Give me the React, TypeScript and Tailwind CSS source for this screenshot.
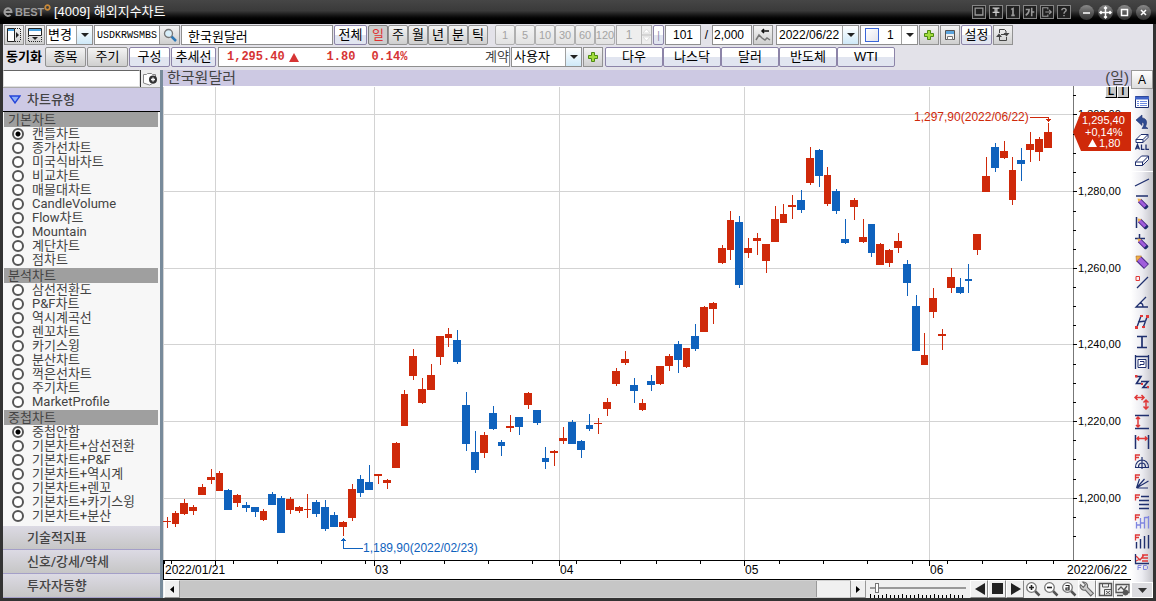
import type { ButtonHTMLAttributes, ReactNode } from "react";
import clsx from "clsx";

type Candle = ["r" | "b", number, number, number, number];

// direction, high, body top, body bottom, low (plot units)
const candles: Candle[] = [
  ["r", 517, 521, 522, 528], ["r", 511, 513, 524, 527], ["r", 499, 503, 514, 515], ["r", 505, 507, 511, 515],
  ["r", 484, 487, 495, 495], ["r", 469, 477, 480, 484], ["r", 471, 473, 491, 491], ["b", 489, 490, 510, 510],
  ["r", 494, 495, 503, 507], ["b", 502, 505, 508, 512], ["b", 507, 507, 512, 517], ["r", 509, 511, 520, 521],
  ["b", 492, 494, 505, 505], ["b", 496, 498, 533, 533], ["r", 497, 499, 510, 514], ["r", 506, 507, 511, 513],
  ["r", 494, 509, 510, 518], ["b", 500, 502, 514, 517], ["b", 500, 507, 529, 531], ["b", 512, 515, 527, 527],
  ["r", 521, 522, 527, 536], ["r", 484, 489, 518, 521], ["b", 475, 479, 493, 497], ["b", 465, 482, 490, 490],
  ["r", 474, 474, 476, 484], ["r", 479, 480, 483, 489], ["r", 442, 443, 468, 468], ["r", 390, 394, 426, 426],
  ["r", 349, 356, 376, 380], ["r", 378, 389, 403, 404], ["r", 364, 375, 390, 390], ["r", 336, 336, 357, 365],
  ["r", 328, 334, 338, 347], ["b", 330, 340, 362, 364], ["b", 392, 405, 444, 451], ["b", 431, 452, 470, 473],
  ["r", 432, 435, 453, 458], ["b", 406, 413, 429, 430], ["b", 440, 442, 446, 456], ["r", 415, 426, 428, 432],
  ["b", 417, 417, 427, 435], ["r", 392, 393, 405, 409], ["b", 410, 410, 423, 425], ["b", 447, 458, 462, 469],
  ["r", 450, 451, 453, 466], ["r", 427, 438, 441, 444], ["b", 420, 422, 444, 444], ["b", 440, 441, 450, 458],
  ["b", 414, 425, 429, 431], ["r", 418, 423, 424, 434], ["r", 398, 402, 409, 416], ["r", 368, 371, 384, 386],
  ["r", 351, 359, 363, 365], ["b", 378, 385, 391, 403], ["r", 399, 403, 410, 411], ["b", 375, 381, 385, 391],
  ["r", 366, 366, 384, 385], ["r", 354, 356, 366, 371], ["b", 341, 344, 360, 373], ["r", 348, 348, 367, 368],
  ["b", 324, 336, 349, 351], ["r", 306, 307, 332, 332], ["r", 302, 303, 309, 324], ["r", 245, 248, 263, 264],
  ["r", 211, 220, 250, 260], ["b", 216, 222, 285, 288], ["r", 238, 248, 253, 258], ["r", 233, 238, 241, 255],
  ["r", 244, 244, 261, 273], ["r", 206, 219, 242, 242], ["r", 204, 214, 223, 223], ["r", 195, 205, 207, 219],
  ["b", 190, 200, 210, 213], ["r", 147, 158, 183, 185], ["b", 149, 150, 176, 187], ["r", 167, 175, 204, 206],
  ["b", 189, 191, 211, 214], ["b", 219, 239, 243, 244], ["r", 198, 200, 207, 220], ["r", 219, 237, 242, 243],
  ["b", 224, 224, 253, 257], ["r", 243, 244, 265, 265], ["r", 249, 250, 263, 267], ["r", 233, 241, 248, 253],
  ["b", 260, 264, 283, 296], ["b", 295, 306, 351, 351], ["r", 333, 355, 365, 365], ["r", 288, 298, 312, 318],
  ["r", 329, 334, 336, 350], ["r", 268, 277, 288, 293], ["b", 278, 287, 293, 294], ["b", 264, 279, 281, 293],
  ["r", 234, 234, 250, 255], ["r", 157, 176, 192, 192], ["b", 143, 147, 168, 172], ["r", 141, 151, 158, 159],
  ["r", 157, 170, 200, 205], ["b", 148, 160, 164, 181], ["r", 132, 144, 150, 162], ["r", 137, 139, 152, 161],
  ["r", 123, 132, 148, 148],
];

const RED = "#cf290a";
const BLUE = "#0f62bd";
const NAVY = "#1f2f6e";
const HOT = "#e03838";

const candleX = (i: number) => Math.floor(167 + i * 8.812);

const priceLines = [
  { y: 114, label: "1,300,00" },
  { y: 191, label: "1,280,00" },
  { y: 268, label: "1,260,00" },
  { y: 344, label: "1,240,00" },
  { y: 421, label: "1,220,00" },
  { y: 498, label: "1,200,00" },
];
const minorTicks = [95, 134, 153, 172, 211, 230, 249, 287, 306, 325, 364, 383, 402, 440, 459, 479, 517, 536];
const months = [
  { x: 215, label: "" },
  { x: 374, label: "03" },
  { x: 559, label: "04" },
  { x: 744, label: "05" },
  { x: 929, label: "06" },
];
const weekTicks = [164, 171, 233, 277, 321, 365, 400, 444, 488, 532, 576, 620, 656, 700, 779, 823, 867, 912, 947, 982, 1026, 1053];

const groups = [
  {
    title: "기본차트",
    name: "basic",
    selected: "캔들차트",
    items: ["캔들차트", "종가선차트", "미국식바차트", "비교차트", "매물대차트", "CandleVolume", "Flow차트", "Mountain", "계단차트", "점차트"],
  },
  {
    title: "분석차트",
    name: "basic",
    selected: "",
    items: ["삼선전환도", "P&F차트", "역시계곡선", "렌꼬차트", "카기스윙", "분산차트", "꺽은선차트", "주기차트", "MarketProfile"],
  },
  {
    title: "중첩차트",
    name: "overlay",
    selected: "중첩안함",
    items: ["중첩안함", "기본차트+삼선전환", "기본차트+P&F", "기본차트+역시계", "기본차트+렌꼬", "기본차트+카기스윙", "기본차트+분산"],
  },
];

interface ToolButtonProps extends ButtonHTMLAttributes<HTMLButtonElement> {
  tone?: "gray" | "glass" | "pressed";
}

function ToolButton({ tone = "gray", className, ...props }: ToolButtonProps) {
  return (
    <button
      type="button"
      className={clsx(
        "flex h-5 flex-none items-center justify-center whitespace-nowrap border",
        tone === "gray" && "border-[#929292] bg-linear-to-b from-[#f4f4f4] to-[#cfcfcf]",
        tone === "glass" && "rounded-xs border-[#8c84a8] bg-linear-to-b from-white from-50% to-[#e1e5f0] to-50%",
        tone === "pressed" && "border-[#808080] bg-[#cccccc] text-[#e03030]",
        className
      )}
      {...props}
    />
  );
}

function DropArrow({ light = false }: { light?: boolean }) {
  return (
    <span
      className={clsx(
        "pointer-events-none flex w-4 flex-none items-center justify-center border-l border-[#a0a0a0]",
        light ? "bg-white" : "bg-linear-to-b from-white to-[#cfe9f8]"
      )}
    >
      <svg width="8" height="4" viewBox="0 0 8 4"><path d="M0 0h8L4 4z" fill="#222" /></svg>
    </span>
  );
}

function PlusIcon() {
  return (
    <svg width="12" height="12" viewBox="0 0 12 12">
      <path d="M4.500 1.500h3v3h3v3h-3v3h-3v-3h-3v-3h3z" fill="#a2dc3c" stroke="#4d8a12" />
    </svg>
  );
}

function TitleBar() {
  const small: { label: string; icon: ReactNode }[] = [
    { label: "창", icon: <path d="M2.500 2.500h9v8h-9z" strokeWidth="1.500" /> },
    { label: "고정", icon: <path d="M3 2.500h8M3 7.500h8M7 8v4M6 3v4M8 3v4" stroke="#ccc" strokeWidth="1.500" /> },
    { label: "1", icon: <path d="M5 4l2-1v8M5 11h4" strokeWidth="2" /> },
    { label: "글꼴", icon: <path d="M2 4h4c0 3-1 5-4 7M9 2v10M9 7h3" strokeWidth="1.800" /> },
    { label: "내보내기", icon: <path d="M8 4V2H2v10h6v-2M5 7h7M9.500 4.500L12 7 9.500 9.500" strokeWidth="1.300" /> },
    { label: "도움말", icon: <path d="M4.500 5c0-3 5-3 5 0 0 1.500-2.500 1.500-2.500 4M7 10.500v1.500" strokeWidth="1.700" /> },
  ];
  const round = [
    { label: "최소화", d: "M4 8h7" },
    { label: "이동", d: "M7.500 2v11M2 7.500h11M6 3.500l1.500-1.500L9 3.500M6 11.500L7.500 13 9 11.500M3.500 6L2 7.500 3.500 9M11.500 6L13 7.500 11.500 9" },
    { label: "최대화", d: "M4.500 4.500h6v6h-6z" },
    { label: "닫기", d: "M5 5l5 5M10 5l-5 5" },
  ];
  return (
    <header className="flex h-6 flex-none items-center bg-linear-to-b from-[#464646] via-[#3a3a3a] via-45% to-black to-90% pr-[5px] pl-[3px]">
      <div className="flex w-[51px] flex-none items-center font-bold text-[#9d9d9d]">
        <svg className="mr-0.5" width="10" height="10" viewBox="0 0 10 10" fill="none" stroke="#9d9d9d" strokeWidth="2"><path d="M1.500 5H8.500A3.500 3.800 0 1 0 7.500 7.800" /></svg>
        <span className="text-[11px] leading-4">BEST</span>
        <svg className="-mt-2.5" width="7" height="7" viewBox="0 0 7 7"><circle cx="3.500" cy="3.500" r="2.300" fill="none" stroke="#c98a3a" strokeWidth="1.700" /></svg>
      </div>
      <h1 className="text-[13px] whitespace-nowrap text-white">[4009] 해외지수차트</h1>
      <div className="ml-auto flex gap-[3px]">
        {small.map((s) => (
          <button key={s.label} type="button" aria-label={s.label} className="size-3.5 border border-[#858585] bg-[#202020]">
            <svg width="12" height="12" viewBox="0 0 14 14" fill="none" stroke="#999">{s.icon}</svg>
          </button>
        ))}
      </div>
      <div className="ml-2 flex gap-1">
        {round.map((r) => (
          <button key={r.label} type="button" aria-label={r.label} className="size-[15px] rounded-full bg-linear-to-b from-[#8a8a8a] to-[#303030]">
            <svg width="15" height="15" viewBox="0 0 15 15" fill="none" stroke="#fff" strokeWidth="1.500"><path d={r.d} /></svg>
          </button>
        ))}
      </div>
    </header>
  );
}

const field = "h-5 flex-none border border-[#8f8f8f] bg-white";

function MainToolbar() {
  return (
    <div className="flex h-5 items-center gap-px">
      <ToolButton aria-label="왼쪽 패널" className="w-5">
        <svg width="16" height="16" viewBox="0 0 16 16" fill="none" stroke="#222">
          <path d="M1.500 1.500h7v13h-7z" fill="#fff" /><path d="M2 3h6" stroke="#4aa3e0" strokeWidth="2" /><path d="M9 1.500h6M9 14.500h6M14.500 2v12" strokeDasharray="1 1" /><path d="M10 5l3 3-3 3z" fill="#222" stroke="none" />
        </svg>
      </ToolButton>
      <ToolButton aria-label="위쪽 패널" className="w-5">
        <svg width="16" height="16" viewBox="0 0 16 16" fill="none" stroke="#222">
          <path d="M1.500 1.500h13v7h-13z" fill="#fff" /><path d="M2 3h12" stroke="#4aa3e0" strokeWidth="2" /><path d="M1.500 9v5.500h13V9" strokeDasharray="1 1" /><path d="M5 10h6l-3 3z" fill="#222" stroke="none" />
        </svg>
      </ToolButton>
      <div className={clsx(field, "flex w-[47px]")}>
        <select aria-label="변경" className="w-0 flex-1 appearance-none pl-px text-[13px] leading-4 outline-none"><option>변경</option></select>
        <DropArrow />
      </div>
      <div className="flex flex-none">
        <input aria-label="종목코드" defaultValue="USDKRWSMBS" className={clsx(field, "w-[66px] pl-0.5 font-['Liberation_Mono'] text-[10px]")} />
        <ToolButton aria-label="종목 검색" className="w-5 border-l-0">
          <svg width="14" height="14" viewBox="0 0 14 14"><path d="M8 8l5 5" stroke="#2f78b5" strokeWidth="2.500" /><circle cx="5.500" cy="5.500" r="4" fill="#d8effa" stroke="#777" strokeWidth="1.300" /></svg>
        </ToolButton>
      </div>
      <input aria-label="종목명" defaultValue="한국원달러" className={clsx(field, "w-[152px] pl-1.5 text-[13px]")} />
      <ToolButton tone="glass" className="w-[33px] text-[13px]">전체</ToolButton>
      <div className="flex flex-none">
        {["일", "주", "월", "년", "분", "틱"].map((t) => (
          <ToolButton key={t} tone={t === "일" ? "pressed" : "gray"} className="w-5 rounded-xs text-[13px]">{t}</ToolButton>
        ))}
      </div>
      <div className="ml-1.5 flex flex-none">
        {["1", "5", "10", "30", "60", "120"].map((t) => (
          <ToolButton key={t} disabled className="w-5 rounded-xs border-[#b0b0b0]! to-[#e2e2e2]! text-[11px] text-[#a4a4a4]">{t}</ToolButton>
        ))}
      </div>
      <div className={clsx(field, "flex w-9 border-[#a8a8a8] bg-[#eeeeee]!")}>
        <input aria-label="분 단위" defaultValue="1" disabled className="w-0 flex-1 text-center text-xs text-[#a4a4a4]" />
        <span className="flex w-2.5 flex-none items-center border-l border-[#b8b8b8]">
          <svg width="9" height="14" viewBox="0 0 9 14"><path d="M1 5l3.500-4L8 5zM1 9l3.500 4L8 9z" fill="#fff" stroke="#ddd" /><path d="M0 7h9" stroke="#bbb" /></svg>
        </span>
      </div>
      <ToolButton tone="glass" className="w-[11px] text-[10px] text-[#8c84a8]">|</ToolButton>
      <input aria-label="조회 개수" defaultValue="101" className={clsx(field, "w-9 text-center text-xs")} />
      <span className="w-[9px] flex-none text-center text-xs">/</span>
      <input aria-label="전체 개수" defaultValue="2,000" className={clsx(field, "w-10 pl-px text-xs")} />
      <ToolButton aria-label="구간 이동" className="w-5">
        <svg width="16" height="14" viewBox="0 0 16 14" fill="none"><path d="M1 12l3-5 3 3 3 2 2-2 3 2" stroke="#777" strokeWidth="1.500" /><path d="M7 3h7M9 1L7 3l2 2" stroke="#111" strokeWidth="1.500" /></svg>
      </ToolButton>
      <div className={clsx(field, "ml-0.5 flex w-[83px]")}>
        <input aria-label="조회 일자" defaultValue="2022/06/22" className="w-0 flex-1 pl-0.5 text-xs" />
        <DropArrow />
      </div>
      <div className={clsx(field, "flex w-[58px] items-center")}>
        <span className="ml-1 size-3.5 flex-none border border-[#3a66d8] bg-linear-to-br from-white to-[#e4e4ec]" />
        <select aria-label="선 굵기" className="w-0 flex-1 appearance-none pl-2 text-xs outline-none"><option>1</option></select>
        <span className="flex h-full"><DropArrow light /></span>
      </div>
      <ToolButton aria-label="추가" className="w-5"><PlusIcon /></ToolButton>
      <ToolButton aria-label="저장" className="w-5">
        <svg width="12" height="12" viewBox="0 0 12 12"><path d="M1.500 1.500h9v9h-9z" fill="#eee" stroke="#555" /><path d="M2 2h8v3H2z" fill="#5ba4dc" /><path d="M3.500 7.500h5v3h-5z" fill="#fff" stroke="#777" /></svg>
      </ToolButton>
      <ToolButton tone="glass" className="w-[31px] text-[13px]">설정</ToolButton>
      <ToolButton aria-label="새로고침" className="w-5">
        <svg width="14" height="14" viewBox="0 0 14 14" fill="none" stroke="#444"><path d="M3.500 5V1.500h5L10 3v2M10.500 9v3.500h-7V9M5 6.500h4" /><path d="M7.500 5h6l-3 3.500zM0 9h6L3 5.500z" fill="#444" stroke="none" /></svg>
      </ToolButton>
    </div>
  );
}

function QuoteToolbar() {
  return (
    <div className="mt-0.5 flex h-5 items-center gap-px text-[13px]">
      <span className="w-10 flex-none text-center leading-5 font-bold whitespace-nowrap">동기화</span>
      <ToolButton className="w-[41px] rounded-xs">종목</ToolButton>
      <ToolButton className="w-[41px] rounded-xs">주기</ToolButton>
      <ToolButton tone="glass" className="w-[41px]">구성</ToolButton>
      <ToolButton tone="glass" className="w-[45px]">추세선</ToolButton>
      <div className={clsx(field, "ml-px flex w-[292px] items-center pl-2 font-['Liberation_Mono'] text-xs font-bold text-[#d63434]")}>
        <span>1,295.40</span>
        <svg className="ml-1" width="10" height="9" viewBox="0 0 10 9"><path d="M5 0l5 9H0z" fill="#d63434" /></svg>
        <span className="ml-7">1.80</span>
        <span className="ml-4">0.14%</span>
        <span className="ml-auto font-['Liberation_Sans','Noto_Sans_CJK_KR'] text-[13px] font-normal text-[#444]">계약</span>
      </div>
      <div className={clsx(field, "flex w-[71px]")}>
        <select aria-label="사용자" className="w-0 flex-1 appearance-none pl-0.5 leading-4 outline-none"><option>사용자</option></select>
        <DropArrow />
      </div>
      <ToolButton aria-label="사용자 추가" className="w-5"><PlusIcon /></ToolButton>
      <div className="ml-px flex flex-none">
        {["다우", "나스닥", "달러", "반도체", "WTI"].map((t) => (
          <ToolButton key={t} tone="glass" className="w-[58px]">{t}</ToolButton>
        ))}
      </div>
    </div>
  );
}

function Sidebar() {
  return (
    <aside className="flex w-[157px] flex-none flex-col bg-[#f7f7f7] font-['Roboto','Noto_Sans_CJK_KR',sans-serif] text-[13px] text-[#444]">
      <div className="flex h-[17px] flex-none">
        <input aria-label="차트 검색" className="w-0 flex-1 border border-t-[#666] border-[#e0e0e0] bg-white" />
        <button type="button" aria-label="검색 추가" className="flex w-5 items-center justify-center border-l border-[#333] bg-[#eee]">
          <svg className="flex-none" width="17" height="14" viewBox="0 0 17 14" fill="none"><path d="M1.500 2.500h3l1-1h4l1 1h3v8l-3 1-3 1.500-6-2z" fill="#fff" stroke="#888" /><circle cx="11" cy="7.500" r="4" fill="#333" /><path d="M11 5.500v4M9 7.500h4" stroke="#fff" strokeWidth="1.300" /></svg>
        </button>
      </div>
      <button type="button" className="flex h-[25px] flex-none items-center gap-1.5 border-t border-b border-t-[#aaa] border-b-black bg-[#cdc9e4] pl-1.5 font-medium">
        <svg width="12" height="9" viewBox="0 0 12 9"><path d="M1 1h10L6 8z" fill="#8fb0f8" stroke="#2444d8" strokeWidth="1.300" /></svg>
        차트유형
      </button>
      {groups.map((g) => (
        <fieldset key={g.title} className="flex flex-none flex-col pb-px">
          <legend className="float-left mr-0.5 ml-px h-[15px] w-[154px] bg-[#9f9f9f] pl-1 leading-[15px]">{g.title}</legend>
          {g.items.map((item) => (
            <label key={item} className="flex h-3.5 items-center gap-2 pl-[9px] leading-3.5 whitespace-nowrap">
              <input
                type="radio"
                name={g.name}
                defaultChecked={item === g.selected}
                className="size-3 flex-none appearance-none rounded-full border-2 border-[#555] bg-white checked:bg-[radial-gradient(circle,#000_2px,#fff_3px)]"
              />
              {item}
            </label>
          ))}
        </fieldset>
      ))}
      <div className="mt-auto flex flex-col">
        {["기술적지표", "신호/강세/약세", "투자자동향"].map((t) => (
          <button key={t} type="button" className="h-6 border-b border-[#a49fc8] bg-linear-to-b from-[#dcdae4] to-[#c6c6c6] pl-6 text-left font-medium">
            {t}
          </button>
        ))}
      </div>
    </aside>
  );
}

function PriceChart() {
  return (
    <svg className="block h-full w-full bg-white" viewBox="163 86 968 494" preserveAspectRatio="xMinYMin meet" fontSize="12" role="img" aria-label="한국원달러 일봉 차트">
      <g shapeRendering="crispEdges">
        {priceLines.map((p) => (
          <rect key={p.y} x="163" y={p.y} width="910" height="1" fill="#d3d3d3" />
        ))}
        {months.map((m) => (
          <rect key={m.x} x={m.x} y="87" width="1" height="473" fill="#d3d3d3" />
        ))}
        <rect x="163" y="87" width="1" height="473" fill="#d3d3d3" />
        <rect x="1073" y="86" width="1" height="474" fill="#777" />
        {priceLines.map((p) => (
          <rect key={p.y} x="1073" y={p.y} width="4" height="1" />
        ))}
        {minorTicks.map((y) => (
          <rect key={y} x="1073" y={y} width="3" height="1" />
        ))}
        <rect x="163" y="560" width="968" height="1" />
        <rect x="163" y="579" width="968" height="1" />
        <rect x="163" y="560" width="1" height="20" />
        {weekTicks.map((x) => (
          <rect key={x} x={x} y="561" width="1" height="3" />
        ))}
        {months.map((m) => (
          <rect key={m.x} x={m.x} y="561" width="1" height="5" />
        ))}
        {candles.map(([dir, high, top, bottom, low], i) => {
          const x = candleX(i);
          const left = i === 0 ? 163 : candleX(i - 1) + 5;
          return (
            <g key={i} fill={dir === "r" ? RED : BLUE}>
              <rect x={x} y={high} width="1" height={low - high} />
              <rect x={left} y={top} width={x + 4 - left} height={bottom - top} />
            </g>
          );
        })}
        <path d="M1030 117.500h18.500v4" fill="none" stroke={RED} />
        <path d="M1046 119h5l-2.500 3z" fill={RED} />
        <path d="M343.500 540v8.500H363" fill="none" stroke={BLUE} />
        <path d="M341 541h5l-2.500-3z" fill={BLUE} />
      </g>
      <g fontSize="11">
        {priceLines.map((p) => (
          <text key={p.y} x="1078" y={p.y + 4}>{p.label}</text>
        ))}
      </g>
      <text x="914" y="121" fill={RED}>1,297,90(2022/06/22)</text>
      <text x="363" y="552" fill={BLUE}>1,189,90(2022/02/23)</text>
      <text x="165" y="574">2022/01/21</text>
      {months.map((m) => (
        <text key={m.x} x={m.x + 1} y="574">{m.label}</text>
      ))}
      <text x="1067" y="574">2022/06/22</text>
      <path d="M1073 132l8-20h50v39h-50z" fill={RED} />
      <g fill="#fff" fontSize="11">
        <text x="1082" y="124">1,295,40</text>
        <text x="1085" y="136">+0,14%</text>
        <path d="M1088 147l4.500-8 4.500 8z" />
        <text x="1099" y="147">1,80</text>
      </g>
    </svg>
  );
}

function MagnifierIcon({ mark }: { mark: ReactNode }) {
  return (
    <svg width="16" height="16" viewBox="0 0 16 16" fill="none">
      <path d="M10 10l4.500 4.500" stroke="#555" strokeWidth="2.500" />
      <circle cx="6.500" cy="6.500" r="4.800" fill="#fff" stroke="#777" strokeWidth="1.300" />
      <g stroke="#222" strokeWidth="1.600">{mark}</g>
    </svg>
  );
}

function ChartFooter() {
  return (
    <div className="flex h-[18px] flex-none items-stretch bg-[#f0f0f0] pl-px">
      <button type="button" aria-label="이전 구간" className="flex w-4 flex-none items-center justify-center border border-white border-r-[#999] border-b-[#999]">
        <svg width="4" height="7" viewBox="0 0 4 7"><path d="M4 0v7L0 3.500z" /></svg>
      </button>
      <div className="flex flex-1 border-y border-[#d0d0d0]">
        <div className="w-[95%] border-r border-[#999] bg-[#c6c6c6]" />
      </div>
      <button type="button" aria-label="다음 구간" className="flex w-4 flex-none items-center justify-center border border-[#999] border-t-white">
        <svg width="4" height="7" viewBox="0 0 4 7"><path d="M0 0v7l4-3.500z" /></svg>
      </button>
      <div className="mx-1 flex w-[96px] flex-none flex-col justify-between">
        <input
          type="range"
          aria-label="확대 비율"
          defaultValue={5}
          className="mt-1 h-2 w-full appearance-none bg-[linear-gradient(#999,#999)] bg-[length:100%_2px] bg-center bg-no-repeat [&::-webkit-slider-thumb]:h-2.5 [&::-webkit-slider-thumb]:w-1 [&::-webkit-slider-thumb]:appearance-none [&::-webkit-slider-thumb]:border [&::-webkit-slider-thumb]:border-[#777] [&::-webkit-slider-thumb]:bg-white"
        />
        <svg width="96" height="4" viewBox="0 0 96 4" shapeRendering="crispEdges">
          {Array.from({ length: 24 }, (_, i) => (
            <rect key={i} x={i * 4} y={i % 4 === 0 ? 0 : 1} width="1" height="4" />
          ))}
        </svg>
      </div>
      {["M12 1v12L2 7z", "M1 1h11v11H1z", "M2 1v12l10-6z"].map((d, i) => (
        <button key={d} type="button" aria-label={["뒤로", "정지", "앞으로"][i]} className="flex w-[18px] flex-none items-center justify-center border border-white border-r-[#888] border-b-[#888]">
          <svg width="13" height="14" viewBox="0 0 13 14"><path d={d} fill="#222" /></svg>
        </button>
      ))}
      <button type="button" aria-label="확대" className="flex w-[18px] flex-none items-center justify-center"><MagnifierIcon mark={<path d="M6.500 4v5M4 6.500h5" />} /></button>
      <button type="button" aria-label="축소" className="flex w-[18px] flex-none items-center justify-center"><MagnifierIcon mark={<path d="M4 6.500h5" />} /></button>
      <button type="button" aria-label="자동 배율" className="flex w-[18px] flex-none items-center justify-center"><MagnifierIcon mark={<path d="M4.500 4.500H8V9H5V7h3" strokeWidth="1.200" />} /></button>
      <button type="button" aria-label="도구" className="flex w-[18px] flex-none items-center justify-center border border-white border-r-[#888]">
        <svg className="flex-none" width="16" height="16" viewBox="0 0 15 15"><path d="M1 4.500a4 4 0 0 0 5 4l5 5.500 2.500-2.500L8 6a4 4 0 0 0-4.500-5L6 3.500 4 6 1.500 3.500z" fill="#ccc" stroke="#666" /></svg>
      </button>
      <button type="button" aria-label="차트 저장" className="flex w-[18px] flex-none items-center justify-center border border-white border-r-[#888]">
        <svg width="15" height="15" viewBox="0 0 15 15" fill="none" stroke="#555"><path d="M1.500 1.500h12v12h-12z" strokeWidth="1.500" /><path d="M4.500 2v3h6V2M6.500 7.500h7v6h-7zM8 9l4 3M12 9l-4 3" /></svg>
      </button>
      <button type="button" aria-label="이미지 저장" className="flex w-[17px] flex-none items-center justify-center border border-white">
        <svg width="15" height="15" viewBox="0 0 15 15" fill="none" stroke="#555"><path d="M1 2.500h13v8H1zM3 8l3-3 3 3 3-4M2 13.500h6" strokeWidth="1.300" /><circle cx="10.500" cy="10.500" r="2.500" fill="#555" /></svg>
      </button>
    </div>
  );
}

function PencilIcon() {
  return (
    <g strokeLinecap="butt">
      <path d="M5.500 6.500l7 7" stroke="#4a2a86" strokeWidth="4.600" />
      <path d="M5.500 6.500l6 6" stroke="#a05ddb" strokeWidth="3" />
      <path d="M3.500 4.500l4 .5L4.500 8z" fill="#f2b04a" stroke="none" />
      <path d="M11.500 12.500l1.700 1.700" stroke={NAVY} strokeWidth="4" />
    </g>
  );
}

const fibMark = <path d="M1.500 6.500v-6M1 1h5M1 3.500h4" stroke={HOT} strokeWidth="1.300" />;

const drawTools: { label: string; icon: ReactNode }[] = [
  { label: "목록", icon: <><path d="M1.500 2.500h13v11h-13z" fill="#fff" /><path d="M1 4h14" stroke="#3f63c8" strokeWidth="3" /><path d="M3 7.500h2M3 9.500h2M3 11.500h2M6 7.500h7M6 9.500h7M6 11.500h7" stroke="#6e8ae0" /></> },
  { label: "되돌리기", icon: <path d="M2 6l6-5v3c4 0 6 4 3.500 8.500l2.500 2H8c3-4 2-6 0-6v3z" fill="#2f4a90" stroke={NAVY} strokeWidth=".6" /> },
  { label: "전체 지우기", icon: <><path d="M2 5.500L7 .500h7l-5 5zM2 5.500v3h7v-3M9 8.500l5-5v-3" fill="#fff" /><path d="M1.500 15.500L3.500 10.500l2 5M2.500 14h2M7.500 10.500v5h3M12 10.500v5h3" strokeWidth="1.300" /></> },
  { label: "지우기", icon: <path d="M1.500 8l6-6h7l-6 6zM1.500 8v3.500h7V8M8.500 11.500l6-6V2" fill="#fff" /> },
  { label: "추세선", icon: <path d="M1 12L15 5" strokeWidth="1.300" /> },
  { label: "수평선", icon: <><path d="M2 2h12" strokeWidth="1.500" /><PencilIcon /></> },
  { label: "수직선", icon: <><path d="M2.500 3v11" strokeWidth="1.500" /><PencilIcon /></> },
  { label: "십자선", icon: <><path d="M5.500 0v9M1 4.500h10" strokeWidth="1.500" /><PencilIcon /></> },
  { label: "형광펜", icon: <><path d="M5 5l7.500 7.500" stroke="#4a2a86" strokeWidth="7" /><path d="M5 5l7 7" stroke="#a05ddb" strokeWidth="5" /><path d="M2 2h5.500L2.500 7.500z" fill="#f2b04a" stroke="#a86a20" strokeWidth=".6" /></> },
  { label: "각도 추세선", icon: <><path d="M2 2.500h3.500v4H2z" stroke={HOT} /><path d="M3 14L14 3" strokeWidth="1.300" /></> },
  { label: "각도", icon: <path d="M14 13H2L12 3M6 9c2 0 3 2 3 4" strokeWidth="1.300" /> },
  { label: "평행선", icon: <><path d="M3 13L7 2M9 14l4-11M4 8l8-1" strokeWidth="1.400" /><path d="M1 12h3v3H1zM6 1h3v2H6zM8 12h3v2H8zM12 1h3v3h-3z" fill={HOT} stroke="none" /></> },
  { label: "구간", icon: <path d="M3 2.500h10M3 13.500h10M8 2.500v11" strokeWidth="1.700" /> },
  { label: "사각형", icon: <><path d="M1.500 1v14M14.500 1v14M1 2.500h14" strokeWidth="1.300" /><path d="M4 5.500h8v8H4zM6 7.500h4v3H6v1.500" fill="#fff" /></> },
  { label: "파동", icon: <><path d="M2 2.500h5L2.500 9.500H8M7 7.500h7l-5 6h6" strokeWidth="1.600" /><path d="M1 1h2.500v2.500H1zM7 9h2v2H7zM13 12h2v2h-2z" fill={HOT} stroke="none" /></> },
  { label: "이동 거리", icon: <path d="M1 3.500h9M3.500 1L1 3.500 3.500 6M7.500 1L10 3.500 7.500 6M12 6v9M9.500 8.500L12 6l2.500 2.500M9.500 12.500L12 15l2.500-2.500" stroke={HOT} strokeWidth="1.500" /> },
  { label: "가격 범위", icon: <><path d="M1 1.500h14M1 14.500h14" strokeWidth="1.300" /><path d="M4 3v10M2 5l2-2 2 2M2 11l2 2 2-2" stroke={HOT} strokeWidth="1.500" /></> },
  { label: "기간 범위", icon: <><path d="M1.500 1v14M14.500 1v14" strokeWidth="1.500" /><path d="M3 4.500h10M5 2.500l-2 2 2 2M11 2.500l2 2-2 2" stroke={HOT} strokeWidth="1.500" /></> },
  { label: "피보나치 원호", icon: <>{fibMark}<path d="M1.500 13.500c0-10 13-10 13 0M4.500 13.500c0-6 7-6 7 0M8 3v12M1 13.500h14" strokeWidth="1.200" /></> },
  { label: "피보나치 팬", icon: <>{fibMark}<path d="M2.500 14l3-9M2.500 14l8-9M2.500 14l12-7M2.500 14H14" strokeWidth="1.200" /></> },
  { label: "피보나치 되돌림", icon: <>{fibMark}<path d="M7 2.500h8M5 6.500h10M5 10.500h10M5 14.500h10" strokeWidth="1.500" /></> },
  { label: "피보나치 목표", icon: <>{fibMark}<path d="M2.500 14.500V8M6.500 14.500V4M2 11h4M6.500 9h4M10.500 3v11.500M14.500 2v12.500M10.500 3.500h4" stroke="#7f86e0" strokeWidth="1.300" /></> },
  { label: "피보나치 시간대", icon: <>{fibMark}<path d="M2.500 8v6.500M6.500 5v9.500M10.500 2v12.500M14.500 1v13.500" strokeWidth="1.400" /></> },
  { label: "채널", icon: <><path d="M1.500 0v9.500H15" strokeWidth="1.300" /><path d="M2 2l4 4 4-5M8 1h6M8 4h6M8 7h6M2 7l4-2" stroke={HOT} strokeWidth="1.300" /><path d="M4 16v-4.500h3.500M4 13.500h3M9.500 11.500v4h3l1-1v-2l-1-1z" stroke="#7f86e0" /></> },
];

function DrawingToolbar() {
  return (
    <aside className="flex w-[22px] flex-none flex-col bg-linear-to-r from-white via-[#ececf1] to-[#c4c4ca]">
      <button type="button" className="h-[19px] flex-none border border-[#999] bg-linear-to-b from-white to-[#ddd] text-xs">A</button>
      <div className="mt-[3px] flex flex-col items-center">
        {drawTools.map((t, i) => (
          <button
            key={t.label}
            type="button"
            aria-label={t.label}
            className={clsx("flex h-5 w-full items-center justify-center", i === 3 && "border-b border-white")}
          >
            <svg className="flex-none" width="16" height="16" viewBox="0 0 16 16" fill="none" stroke={NAVY}>{t.icon}</svg>
          </button>
        ))}
      </div>
      <button type="button" aria-label="도구 더보기" className="mt-auto flex h-4 w-full flex-none items-center justify-center border border-white bg-[#dcdce0]">
        <svg width="9" height="5" viewBox="0 0 9 5"><path d="M0 0h9L4.500 5z" fill="#333" /></svg>
      </button>
    </aside>
  );
}

export default function App() {
  return (
    <div className="flex min-h-screen flex-col bg-[#333] font-['Liberation_Sans','Noto_Sans_CJK_KR',sans-serif] text-black">
      <TitleBar />
      <main className="mx-[3px] mb-[3px] flex flex-1 flex-col bg-[#e3e2e9]">
        <div className="h-[46px] flex-none overflow-hidden pt-px pl-px">
          <MainToolbar />
          <QuoteToolbar />
        </div>
        <div className="flex flex-1">
          <Sidebar />
          <section className="flex min-w-0 flex-1 flex-col border-l-3 border-[#788b9b]">
            <div className="relative flex h-4 flex-none items-center justify-between bg-[#cdc9e3] pr-0.5 pl-1 text-[15px] leading-4 text-[#444]">
              <h2>한국원달러</h2>
              <span>(일)</span>
              <div className="absolute top-full right-0.5 z-10 flex">
                {["L", "I"].map((t) => (
                  <button key={t} type="button" className="flex h-3 w-3 items-center justify-center border border-white border-r-black border-b-black bg-[#c8c8c8] text-[10px] leading-3 font-bold text-black">{t}</button>
                ))}
              </div>
            </div>
            <div className="min-h-0 flex-1"><PriceChart /></div>
            <ChartFooter />
          </section>
          <DrawingToolbar />
        </div>
      </main>
    </div>
  );
}
